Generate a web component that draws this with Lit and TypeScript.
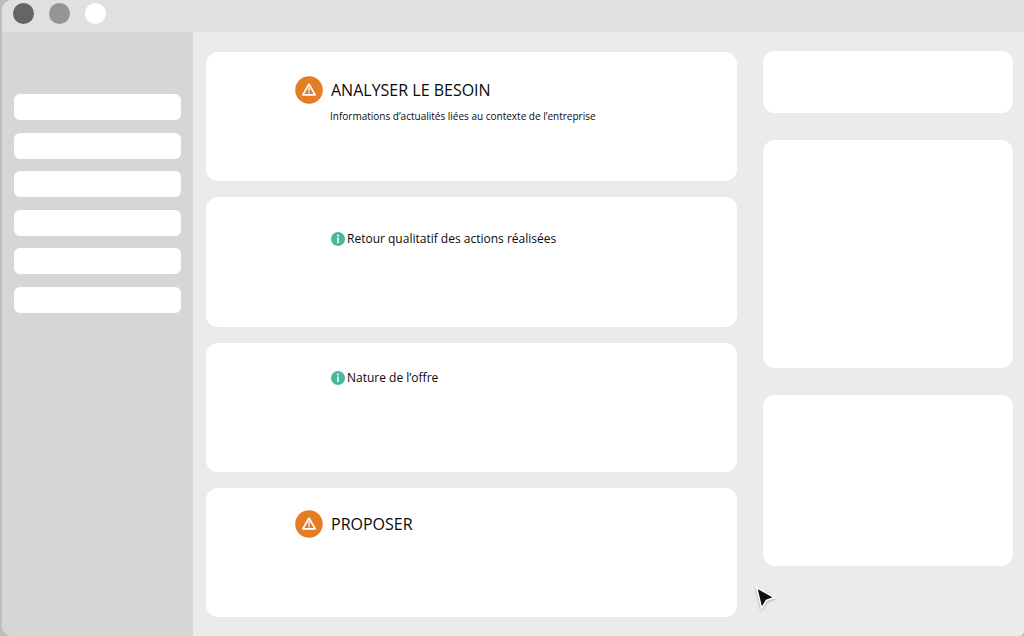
import { LitElement, html, css, svg } from "lit";
import { customElement } from "lit/decorators.js";

const warningIcon = svg`
  <circle cx="14" cy="14" r="13.8" fill="#e57d25" />
  <path d="M14 8.2 L20.2 18.9 H7.8 Z" fill="none" stroke="#fff" stroke-width="1.7" stroke-linejoin="round" />
  <path d="M14 12 V14.8" stroke="#fff" stroke-width="1.4" stroke-linecap="round" />
  <circle cx="14" cy="16.8" r="0.8" fill="#fff" />
`;

const infoIcon = svg`
  <circle cx="7" cy="7" r="7" fill="#46b99f" />
  <circle cx="7" cy="3.5" r="1" fill="#fff" />
  <path d="M7 5.5 V11" stroke="#fff" stroke-width="1.6" />
`;

@customElement("app-root")
export class AppRoot extends LitElement {
  static styles = css`
    :host {
      display: block;
      min-height: 100vh;
      background: #bdbdbd;
      font-family: "Open Sans", "Noto Sans", sans-serif;
      color: #0a0a0a;
    }
    .window {
      position: relative;
      display: flex;
      flex-direction: column;
      box-sizing: border-box;
      min-height: 100vh;
      margin-left: 2px;
      border-radius: 10px 0 5px 10px;
      overflow: hidden;
      background: #ebebeb;
    }
    .titlebar {
      display: flex;
      align-items: flex-start;
      gap: 15px;
      box-sizing: border-box;
      height: 32px;
      padding: 3px 11px;
      background: #e0e0e0;
    }
    .dot {
      width: 21px;
      height: 21px;
      border-radius: 50%;
      background: #fff;
    }
    .dark {
      background: #656565;
    }
    .mid {
      background: #959595;
    }
    .body {
      flex: 1;
      display: grid;
      grid-template-columns: 191px minmax(0, 1fr) 261px;
    }
    .sidebar {
      padding: 62px 12px 0;
      background: #d5d6d6;
    }
    .menu {
      display: flex;
      flex-direction: column;
      justify-content: space-between;
      height: 219px;
      margin: 0;
      padding: 0;
      list-style: none;
    }
    .item {
      height: 26px;
      border-radius: 6px;
      background: #fff;
    }
    .main {
      display: grid;
      grid-auto-rows: 1fr;
      gap: 16px;
      padding: 20px 26px 19px 13px;
    }
    .card {
      box-sizing: border-box;
      padding: 24px 16px 12px 89px;
      border-radius: 12px;
      background: #fff;
    }
    .card.compact {
      padding-top: 22px;
    }
    .step {
      display: flex;
      align-items: center;
      gap: 8px;
    }
    .icon {
      flex: none;
      display: block;
    }
    .title {
      margin: 0;
      font-size: 16px;
      line-height: 28px;
      font-weight: 400;
    }
    .note {
      margin: 4px 0 0 35px;
      font-size: 10px;
      line-height: 16px;
    }
    .card.info {
      padding-top: 33px;
      padding-left: 125px;
    }
    .card.raised {
      padding-top: 26px;
    }
    .line {
      display: flex;
      align-items: center;
      gap: 2px;
      margin: 0;
      font-size: 12px;
      line-height: 18px;
      font-weight: 400;
    }
    .aside {
      display: flex;
      flex-direction: column;
      gap: 27px;
      margin-right: 11px;
      padding-top: 19px;
    }
    .panel {
      height: 228px;
      border-radius: 12px;
      background: #fff;
    }
    .panel.short {
      height: 62px;
    }
    .panel.medium {
      height: 171px;
    }
    .cursor {
      position: absolute;
      left: 752px;
      top: 584px;
      filter: drop-shadow(0 1px 1px rgba(0, 0, 0, 0.3));
    }
  `;

  private step(title: string, note = "") {
    return html`
      <section class="card ${note ? "" : "compact"}">
        <div class="step">
          <svg class="icon" width="28" height="28" viewBox="0 0 28 28" aria-hidden="true">${warningIcon}</svg>
          <h2 class="title">${title}</h2>
        </div>
        ${note ? html`<p class="note">${note}</p>` : ""}
      </section>
    `;
  }

  private info(title: string, modifier = "") {
    return html`
      <section class="card info ${modifier}">
        <h3 class="line">
          <svg class="icon" width="14" height="14" viewBox="0 0 14 14" aria-hidden="true">${infoIcon}</svg>
          ${title}
        </h3>
      </section>
    `;
  }

  render() {
    return html`
      <div class="window">
        <header class="titlebar">
          <span class="dot dark"></span>
          <span class="dot mid"></span>
          <span class="dot"></span>
        </header>
        <div class="body">
          <nav class="sidebar">
            <ul class="menu">
              ${Array.from({ length: 6 }, () => html`<li class="item"></li>`)}
            </ul>
          </nav>
          <main class="main">
            ${this.step("ANALYSER LE BESOIN", "Informations d’actualités liées au contexte de l’entreprise")}
            ${this.info("Retour qualitatif des actions réalisées")}
            ${this.info("Nature de l’offre", "raised")}
            ${this.step("PROPOSER")}
          </main>
          <aside class="aside">
            <div class="panel short"></div>
            <div class="panel"></div>
            <div class="panel medium"></div>
          </aside>
        </div>
        <svg class="cursor" width="26" height="30" viewBox="0 0 26 30" aria-hidden="true">
          <path d="M2.5 3.5 L20.5 13.6 L12.4 16.4 L7.6 24.5 Z" fill="#111" stroke="#fff" stroke-width="1.6" />
        </svg>
      </div>
    `;
  }
}
